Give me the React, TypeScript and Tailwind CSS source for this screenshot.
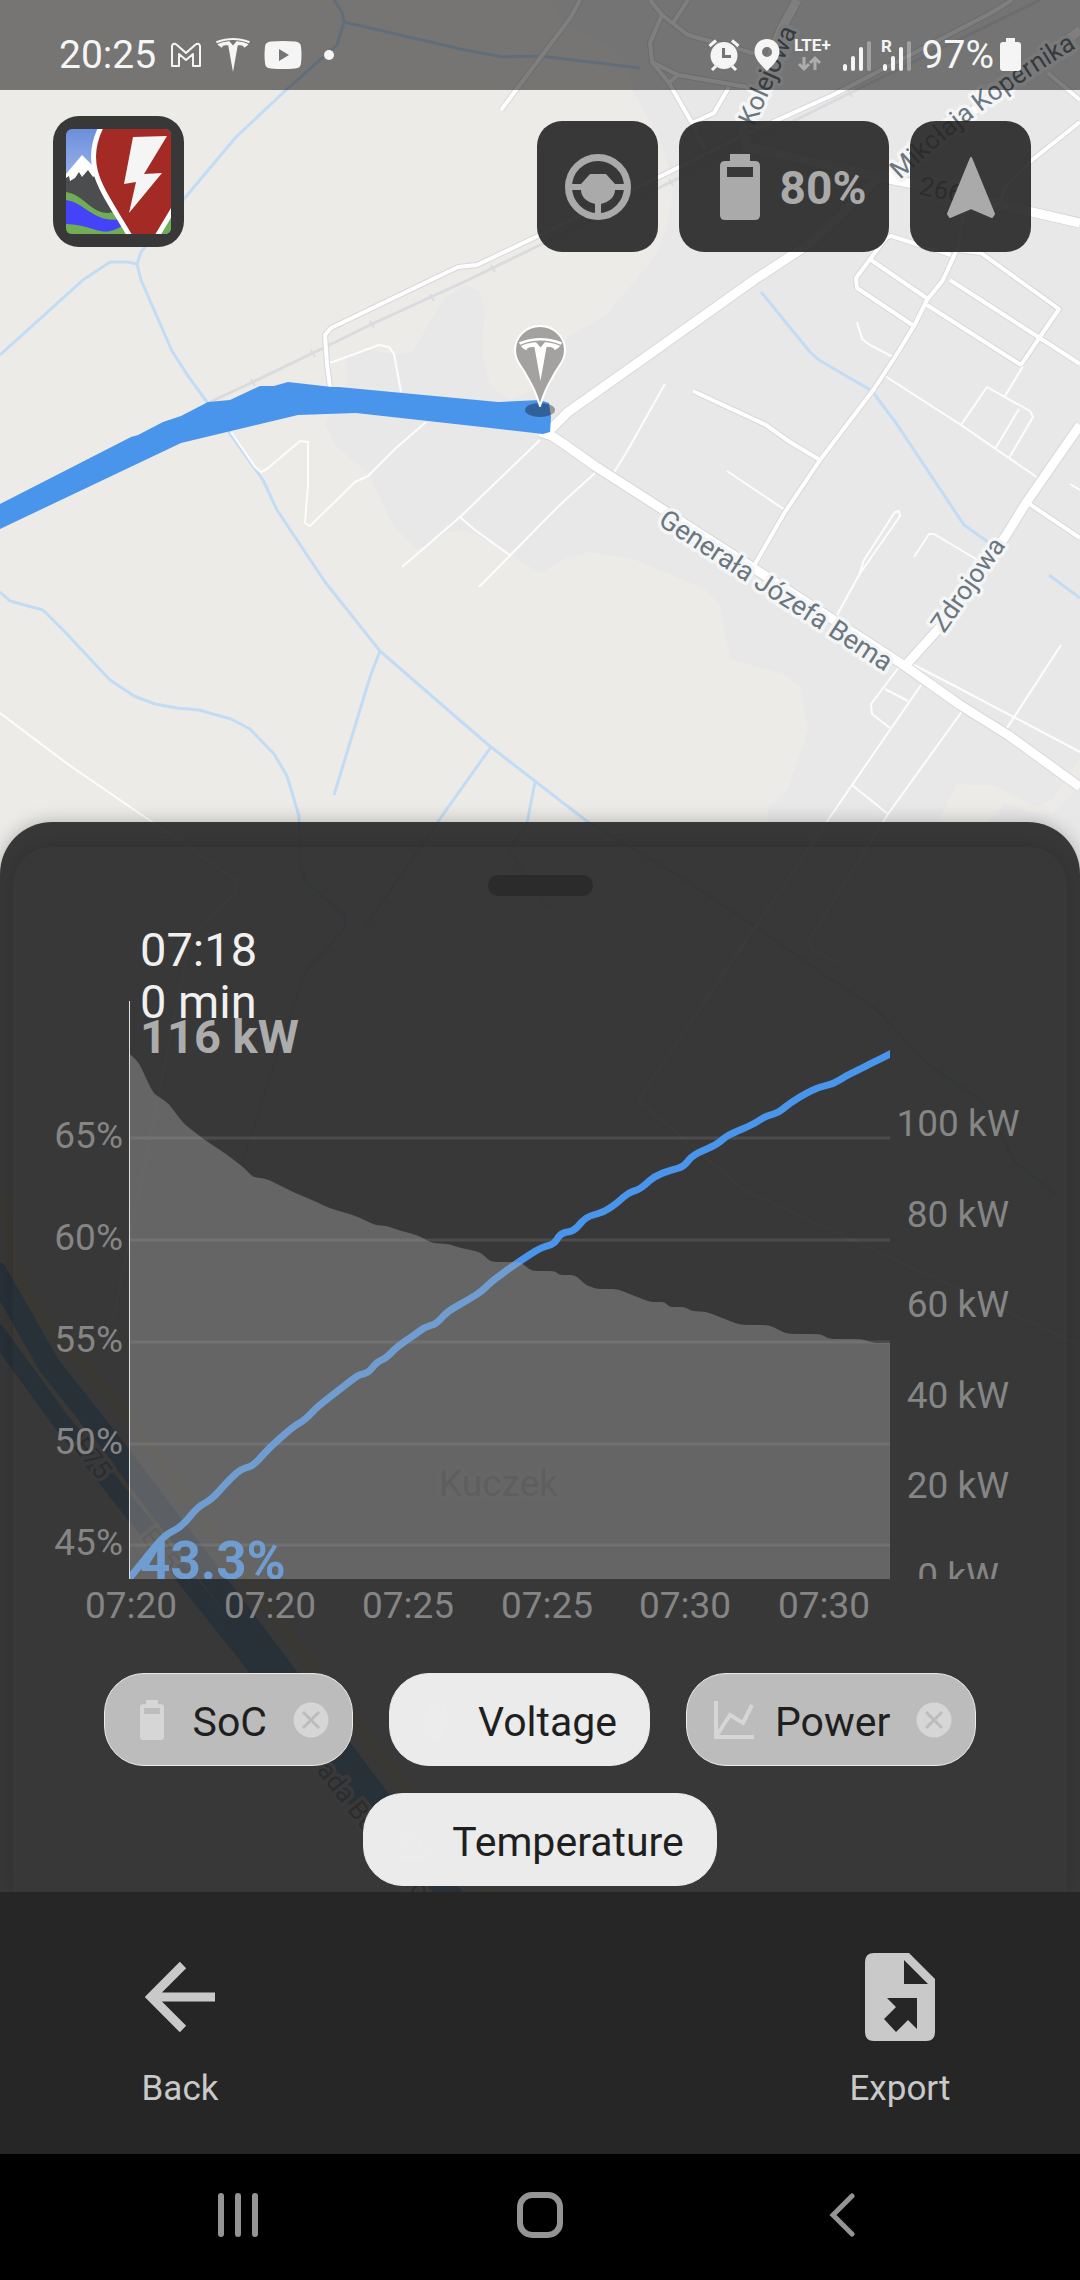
import type { ReactNode } from 'react';
import { SiTesla } from 'react-icons/si';

const socPoints =
  '129,1579 148,1555 165,1535 181,1527 198,1507 212,1499 229,1480 241,1469 253,1466 270,1447 293,1427 306,1419 317,1407 339,1390 358,1375 368,1373 377,1362 386,1358 398,1346 413,1336 425,1327 436,1324 448,1311 468,1300 482,1291 492,1281 517,1263 540,1248 554,1244 561,1233 574,1231 586,1217 604,1212 617,1203 628,1193 640,1189 655,1176 671,1170 683,1167 693,1155 716,1145 728,1135 752,1125 766,1116 778,1113 790,1103 805,1094 819,1087 833,1084 846,1076 860,1069 876,1061 892,1053';

const powerPoints =
  '129,1053 139,1063 153,1093 168,1103 184,1124 205,1140 226,1154 243,1167 253,1177 267,1179 293,1192 312,1200 329,1208 356,1216 375,1225 387,1226 398,1230 417,1235 432,1243 448,1244 461,1248 480,1252 491,1262 520,1262 532,1271 554,1271 560,1275 575,1275 586,1285 597,1289 617,1289 650,1302 664,1302 670,1307 684,1307 692,1311 707,1312 740,1325 769,1325 787,1334 820,1334 830,1339 861,1339 874,1343 890,1343';

// Rounds the corners of a point list, `amount` being the share of each
// segment that is given up to the curve at either end.
function smoothPath(points: string, amount: number): string {
  const pts = points.split(' ').map((p) => p.split(',').map(Number));
  let d = `M${pts[0][0]} ${pts[0][1]}`;
  for (let i = 1; i < pts.length - 1; i++) {
    const [x, y] = pts[i];
    const [px, py] = pts[i - 1];
    const [nx, ny] = pts[i + 1];
    d += `L${x + (px - x) * amount} ${y + (py - y) * amount}`;
    d += `Q${x} ${y} ${x + (nx - x) * amount} ${y + (ny - y) * amount}`;
  }
  const last = pts[pts.length - 1];
  return `${d}L${last[0]} ${last[1]}`;
}

const SOC_LINE = smoothPath(socPoints, 0.4);
const POWER_AREA = `${smoothPath(powerPoints, 0.25)}V1579H129Z`;

const socTicks = [
  { label: '65%', y: 1138 },
  { label: '60%', y: 1240 },
  { label: '55%', y: 1342 },
  { label: '50%', y: 1444 },
  { label: '45%', y: 1545 },
];

const powerTicks = [
  { label: '100 kW', y: 1136 },
  { label: '80 kW', y: 1227 },
  { label: '60 kW', y: 1317 },
  { label: '40 kW', y: 1408 },
  { label: '20 kW', y: 1498 },
  { label: '0 kW', y: 1589 },
];

const timeTicks = [
  { label: '07:20', x: 131 },
  { label: '07:20', x: 270 },
  { label: '07:25', x: 408 },
  { label: '07:25', x: 547 },
  { label: '07:30', x: 685 },
  { label: '07:30', x: 824 },
];

const water = [
  'M334 0 342 12 344 22 337 45 286 90 236 137 184 199 141 252 137 264 141 280 172 351 188 376 207 402 229 432 263 480 277 510 325 582 380 651 456 717 491 747 540 785 588 822 674 873 753 925 829 978 874 1007 929 1065 984 1102 1015 1162 1057 1195',
  'M137 264 128 262H110L83 280 0 355',
  'M344 22 465 50 503 57 540 56 640 68',
  'M0 592 10 601 43 610 65 632 110 680 134 696 155 704 177 708 199 710 231 719 250 729 274 754 287 776 299 816 300 863 305 880 345 917V928L305 972 270 1077 241 1167 141 1433',
  'M380 651 370 677 334 795',
  'M491 747 437 823 365 927',
  'M535 782 527 823 509 850 548 908',
  'M761 292 810 352 819 360 872 391 896 423 964 525 988 542',
  'M1049 575 1080 598',
];

const thinRoads = [
  'M727 471 785 510',
  'M665 384 626 453 613 474',
  'M595 473 564 501 540 525 479 587',
  'M540 440 460 517 402 567',
  'M460 517 475 530 511 556',
  'M857 322 862 339 870 345 895 358',
  'M885 376 961 425 1038 478',
  'M961 425 987 387 1030 411 1033 417 1009 458',
  'M1019 409 995 449',
  'M1005 396 1048 325',
  'M836 617 859 575 900 516 899 511 895 512 864 560 859 575',
  'M914 557 929 534H934L981 562',
  'M1070 484 1080 490',
  'M908 662 953 685 1080 752',
  'M1061 645 1007 728',
  'M899 667 871 704 872 714 890 728',
  'M885 689 908 701',
  'M921 685 852 785 826 823 638 1100 744 1190 1080 1345',
  'M963 710 888 814 809 940 812 948 838 964',
  'M852 785 888 814',
  'M330 363 379 345 389 347 394 354 401 392',
  'M231 432 255 467 261 472 267 469 300 441 308 442 308 484 305 523 310 526 355 482 368 476 396 448 426 422',
  'M0 713 69 765 152 822 236 880 235 893 190 940 113 1320',
];

const minorRoads = [
  'M755 564 785 512 820 460 874 389 895 357 914 326 927 300 943 280 958 247 964 213',
  'M693 391 766 425 790 442 820 460',
  'M914 326 857 288 856 278 886 238 891 236 951 255',
  'M871 260 928 299',
  'M927 305 1021 365',
  'M950 280 1080 364',
  'M958 250 981 253 1059 309 1048 325 1021 365',
  'M1028 503 1080 538',
  'M580 0 571 17 501 110',
  'M650 0 662 15 688 35 760 55',
  'M688 0 673 23',
  'M662 15 650 43 652 62 669 83 692 123 705 150',
  'M652 62 678 75 747 87',
  'M669 83 678 75',
  'M729 87 714 113 692 123',
  'M1048 73 1080 100',
  'M1080 122 1032 160 1005 187 1001 200',
  'M1012 0 991 13 833 95 740 137 659 177 540 235 477 265 458 267 331 328 325 335 327 364 330 387',
];

const mainRoads = [
  'M550 430 568 412 643 359 754 280 812 242 881 175',
  'M540 432 552 436 564 444 595 466 662 509 905 666 960 705 1008 735 1080 787',
  'M905 666 941 626 1005 537 1026 503 1080 425',
  'M797 0 781 30 747 117 743 133 747 147 884 178 919 185 1032 212 1080 223',
  'M884 178 988 100 1080 30',
];

function MapCanvas() {
  const label = 'fill-[#6b767e] stroke-[#f4f5f6] text-[26px] [paint-order:stroke]';

  return (
    <svg
      viewBox="0 0 1080 2280"
      preserveAspectRatio="xMidYMin slice"
      className="absolute inset-0 h-full w-full"
      fill="none"
      strokeLinejoin="round"
      role="img"
      aria-label="Map"
    >
      <rect width="1080" height="2280" fill="#ecebe7" />
      <path
        fill="#e8e8e8"
        d="M547 0 566 23 602 43 628 67 635 95 657 133 664 150 674 187 667 227 657 253 636 280 605 316 568 337 530 391 510 400 491 387 482 351 485 309 479 291 465 285 444 298 413 351 396 355 372 350 347 353V412L331 414 325 425 336 446 368 473 393 525 418 550 448 532 461 530 482 537 540 573 568 557 588 552 633 559 705 589 720 605 730 659 785 675 801 687 808 730 788 789 768 809 770 900H1080V0Z"
      />
      <path fill="#ecebe7" d="M939 819 957 784 995 786 1036 807 1052 800 1080 759V787L1052 814 1036 814 1005 803 988 822 960 830Z" />

      <g stroke="#c2dcf4" strokeWidth="3">
        {water.map((d) => <path key={d} d={d} />)}
      </g>
      <g stroke="#dadbde" strokeWidth="3">
        <path d="M210 402 253 382 313 353 372 324 468 280 540 245 671 182 850 93 1040 0" />
        <path d="M251 379 255 386M311 350 315 357M370 321 374 328M430 294 434 301M491 265 495 272M669 179 673 186M848 90 852 97" strokeWidth="2" />
      </g>
      <g stroke="#fdfdfd" strokeWidth="2">
        {thinRoads.map((d) => <path key={d} d={d} />)}
      </g>
      <g stroke="#d7d8da" strokeWidth="6">
        {minorRoads.map((d) => <path key={d} d={d} />)}
      </g>
      <g stroke="#d7d8da" strokeWidth="11">
        {mainRoads.map((d) => <path key={d} d={d} />)}
      </g>
      <g stroke="#fff" strokeWidth="4">
        {minorRoads.map((d) => <path key={d} d={d} />)}
      </g>
      <g stroke="#fff" strokeWidth="9">
        {mainRoads.map((d) => <path key={d} d={d} />)}
      </g>

      {/* motorway running below the sheet */}
      <g strokeLinecap="round">
        <path stroke="#f6e6b0" strokeWidth="11" d="M3 1200 14 1267 41 1317 129 1417 300 1650 492 1900" />
        <path stroke="#f6e6b0" strokeWidth="6" d="M0 1310 48 1390 255 1650 444 1900" />
        <path stroke="#4a95ec" strokeWidth="22" d="M-4 1272 49 1365 122 1458 267 1650 455 1900" />
        <path stroke="#4a95ec" strokeWidth="18" d="M-4 1332 60 1420 243 1650 434 1900" />
      </g>

      <path
        fill="#4a95ec"
        d="M0 504 131 437 138 435 163 422 181 416 208 402 230 400 260 386H274L288 382 332 387H339L498 402 540 400 549 403 551 417 550 432 543 434 482 427 356 413 298 415 181 443 0 529Z"
      />

      <g strokeWidth="7">
        <text transform="translate(754 127) rotate(-66)" className={label}>Kolejowa</text>
        <path id="kopernika" d="M900 180 Q985 100 1090 40" />
        <text className={label}><textPath href="#kopernika">Mikołaja Kopernika</textPath></text>
        <text transform="translate(657 524) rotate(33)" className="fill-[#6b767e] stroke-[#f4f5f6] text-[27px] [paint-order:stroke]">
          Generała Józefa Bema
        </text>
        <text transform="translate(944 634) rotate(-55)" className={label}>Zdrojowa</text>
        <text transform="translate(918 194) rotate(12)" className={label}>266</text>
        <text transform="translate(72 1446) rotate(52)" className={label}>E75</text>
        <text transform="translate(140 1537) rotate(52)" className={label}>E75</text>
        <text transform="translate(264 1704) rotate(52)" className={label}>Autostrada Bursztynowa</text>
        <text x="439" y="1496" className="fill-[#6b767e] stroke-[#f4f5f6] text-[37px] [paint-order:stroke]">Kuczek</text>
      </g>

      {/* charger marker */}
      <ellipse cx="540" cy="410" rx="15" ry="7" fill="#000" fillOpacity=".35" />
      <path
        fill="#a3a2a0"
        stroke="#fff"
        strokeWidth="2"
        d="M540 406C536 392 532 385 524 371 518 362 515 358 515 350a25 24 0 0 1 50 0C565 358 562 362 556 371 548 385 544 392 540 406Z"
      />
      <SiTesla x="519" y="338" size={43} color="#fff" />
    </svg>
  );
}

function SignalIcon({ roaming }: { roaming?: boolean }) {
  return (
    <svg viewBox="0 0 30 34" className="h-[34px] w-[30px] overflow-visible" strokeWidth="4" strokeLinecap="round" stroke="currentColor">
      {roaming && <text x="-1" y="14" stroke="none" className="fill-current text-[17px] font-bold">R</text>}
      <path d="M3 31V28M11 31V20M19 31V11" />
      <path d="M27 31V5" strokeOpacity=".35" />
    </svg>
  );
}

function StatusBar() {
  return (
    <div className="flex h-[90px] items-center justify-between bg-black/50 pt-5 pr-[59px] pl-[59px] text-[39px] text-[#f5f5f5]">
      <div className="flex items-center gap-[14px]">
        <span>20:25</span>
        <svg viewBox="0 0 32 26" className="h-[26px] w-8" fill="none" stroke="currentColor" strokeWidth="2" strokeLinejoin="round">
          <path d="M2 24V4Q3 0 7 3L16 11 25 3Q29 0 30 4V24H23V12L16 18 9 12V24Z" />
        </svg>
        <SiTesla className="size-[34px]" />
        <svg viewBox="0 0 38 28" className="h-7 w-[38px]">
          <path fill="currentColor" fillRule="evenodd" d="M7 .5Q19-.5 31 .5 37 1 37 6 38 14 37 22 37 27 31 27.500 19 28.500 7 27.500 1 27 1 22 0 14 1 6 1 1 7 .5ZM15 8V20L25 14Z" />
        </svg>
        <span className="ml-2 size-[10px] rounded-full bg-[#f5f5f5]" />
      </div>
      <div className="flex items-center gap-[10px]">
        <svg viewBox="0 0 32 32" className="mr-1 size-8">
          <path fill="currentColor" fillRule="evenodd" d="M16 3a13.500 13.500 0 1 1 0 27 13.500 13.500 0 0 1 0-27ZM14 9V19H23V16H17V9Z" />
          <path d="M1.500 7 8 1.500M30.500 7 24 1.500M4 31 8 27M28 31 24 27" stroke="currentColor" strokeWidth="3" />
        </svg>
        <svg viewBox="0 0 26 32" className="mr-1 h-8 w-[26px]">
          <path fill="currentColor" fillRule="evenodd" d="M13 0C20 0 25.500 5.500 25.500 12.500 25.500 20 19 26 13 32 7 26 .5 20 .5 12.500.5 5.500 6 0 13 0ZM13 8a5 5 0 1 0 0 10 5 5 0 0 0 0-10Z" />
        </svg>
        <svg viewBox="0 0 38 36" className="h-9 w-[38px] overflow-visible">
          <text x="0" y="14" className="fill-current text-[17px] font-bold">LTE+</text>
          <path d="M10 20V31M5 27 10 32 15 27M21 33V22M16 26 21 21 26 26" fill="none" stroke="currentColor" strokeOpacity=".45" strokeWidth="3" />
        </svg>
        <SignalIcon />
        <SignalIcon roaming />
        <div className="flex items-center gap-[6px]">
          <span>97%</span>
          <svg viewBox="0 0 21 34" className="h-[34px] w-[21px]">
            <path fill="currentColor" d="M6 0H15V4H18Q21 4 21 7V30Q21 33 18 33H3Q0 33 0 30V7Q0 4 3 4H6Z" />
          </svg>
        </div>
      </div>
    </div>
  );
}

function AppLogo() {
  return (
    <svg viewBox="0 0 105 105" className="w-full rounded-md" fill="none">
      <defs>
        <linearGradient id="sky" x1="0" y1="0" x2="0" y2="1">
          <stop stopColor="#6c8fdc" />
          <stop offset=".5" stopColor="#9cb4ec" />
        </linearGradient>
      </defs>
      <rect width="105" height="105" fill="url(#sky)" />
      <path fill="#4c4d4f" d="M0 46 16 30 60 80V105H0Z" />
      <path fill="#fff" d="M0 45 16 26 34 44 27 48 22 41 16 48 13 43 9 49 4 52 3 47 0 49Z" />
      <path fill="#70ad55" d="M0 63C18 66 25 84 42 84L70 80V105H0Z" />
      <path fill="#4543f7" d="M0 71C20 74 28 95 56 90V97C35 110 30 96 0 95Z" />
      <path fill="#70ad55" d="M90 105 105 82V105Z" />
      <path fill="#a42b25" stroke="#fff" strokeWidth="5" d="M36-4C14 38 38 62 65 109H90L112 72V-4Z" />
      <path fill="#f5f5f5" d="M67 8 101 7 78 45 96 44 63 84 70 53 58 55Z" />
    </svg>
  );
}

function BatteryIcon({ className }: { className: string }) {
  return (
    <svg viewBox="0 0 40 66" preserveAspectRatio="none" className={className}>
      <path
        fill="currentColor"
        fillRule="evenodd"
        d="M10 0H30V7H35Q40 7 40 12V61Q40 66 35 66H5Q0 66 0 61V12Q0 7 5 7H10ZM7 13V23H33V13Z"
      />
    </svg>
  );
}

function MapButton({ label, className, children }: { label: string; className: string; children: ReactNode }) {
  return (
    <button
      type="button"
      aria-label={label}
      className={`flex h-[131px] items-center justify-center gap-5 rounded-[25px] bg-[#252525]/90 text-[#aaaaaa] ${className}`}
    >
      {children}
    </button>
  );
}

function TopControls() {
  return (
    <header className="flex items-start justify-between pt-[26px] pr-[49px] pl-[53px]">
      <button type="button" aria-label="Home" className="w-[131px] rounded-[26px] bg-[#383838] p-[13px]">
        <AppLogo />
      </button>
      <div className="flex gap-[21px] pt-[5px]">
        <MapButton label="Driving mode" className="w-[121px]">
          <svg viewBox="0 0 66 66" className="size-[66px]">
            <circle cx="33" cy="33" r="29.500" fill="none" stroke="currentColor" strokeWidth="7" />
            <path fill="currentColor" d="M3 30H16L25 20H41L50 30H63V36H50C50 43 44 48 36 50V63H30V50C22 48 16 43 16 36H3Z" />
          </svg>
        </MapButton>
        <MapButton label="Target charge 80%" className="w-[210px] pl-[18px]">
          <BatteryIcon className="h-[66px] w-10" />
          <span className="pt-1 text-[46px] font-bold">80%</span>
        </MapButton>
        <MapButton label="Navigate" className="w-[121px]">
          <svg viewBox="0 0 50 62" className="h-[62px] w-[50px]">
            <path fill="currentColor" stroke="currentColor" strokeWidth="2" strokeLinejoin="round" d="M25 2 48 58 46 61 25 52 4 61 2 58Z" />
          </svg>
        </MapButton>
      </div>
    </header>
  );
}

function ChargeChart() {
  return (
    <svg viewBox="13 900 1054 740" className="mt-1 w-full" fill="none" role="img" aria-label="Charge session">
      <clipPath id="plot">
        <rect x="13" y="900" width="1054" height="679" />
      </clipPath>
      <clipPath id="series">
        <rect x="129" y="900" width="761" height="679" />
      </clipPath>
      <g stroke="#fff" strokeOpacity=".1" strokeWidth="3">
        {socTicks.map((tick) => <path key={tick.label} d={`M129 ${tick.y}H890`} />)}
      </g>
      <g clipPath="url(#series)">
        <path d={SOC_LINE} stroke="#4a95ec" strokeWidth="7" />
        <text x="140" y="1579" className="fill-[#4a95ec] text-[53px] font-bold">43.3%</text>
        <path d={POWER_AREA} fill="#ababab" fillOpacity=".4" />
      </g>
      <path d="M129 1001V1579" stroke="#e0e0e0" strokeWidth="1" shapeRendering="crispEdges" />

      <g className="fill-[#858585] text-[37px]" clipPath="url(#plot)">
        {socTicks.map((tick) => (
          <text key={tick.label} x="123" y={tick.y + 10} textAnchor="end">{tick.label}</text>
        ))}
        {powerTicks.map((tick) => (
          <text key={tick.label} x="958" y={tick.y} textAnchor="middle">{tick.label}</text>
        ))}
      </g>
      <g className="fill-[#858585] text-[37px]">
        {timeTicks.map((tick) => (
          <text key={tick.x} x={tick.x} y="1618" textAnchor="middle">{tick.label}</text>
        ))}
      </g>

      <g className="fill-[#f0f0f0] text-[47px]">
        <text x="140" y="966">07:18</text>
        <text x="140" y="1018">0 min</text>
        <text x="140" y="1053" className="fill-[#acacac] font-bold">116 kW</text>
      </g>
    </svg>
  );
}

function ChipCloseIcon() {
  return (
    <svg viewBox="0 0 36 36" className="ml-[26px] size-9 text-[#d6d6d6]">
      <circle cx="18" cy="18" r="17.500" fill="currentColor" />
      <path d="M10 10 26 26M26 10 10 26" stroke="#bcbcbc" strokeWidth="3" />
    </svg>
  );
}

function Chip({ label, icon, selected }: { label: string; icon: ReactNode; selected?: boolean }) {
  return (
    <button
      type="button"
      aria-pressed={selected ?? false}
      className={`flex h-[93px] items-center rounded-[40px] border border-[#ebebeb] pl-[22px] text-[41px] text-[#1f1f1f] ${
        selected ? 'bg-[#bcbcbc] pr-[23px]' : 'bg-[#ebebeb] pr-8'
      }`}
    >
      <span className={`mr-4 flex w-[50px] justify-center ${selected ? 'text-[#d6d6d6]' : 'text-[#ececec]'}`}>
        {icon}
      </span>
      <span className="pt-[6px]">{label}</span>
      {selected && <ChipCloseIcon />}
    </button>
  );
}

function SeriesChips() {
  return (
    <div className="mt-[33px] flex flex-wrap justify-center gap-x-9 gap-y-[27px] px-10">
      <Chip label="SoC" selected icon={<BatteryIcon className="h-10 w-6" />} />
      <Chip
        label="Voltage"
        icon={
          <svg viewBox="0 0 24 38" className="h-[38px] w-6">
            <path fill="currentColor" d="M4 0H8V9H16V0H20V9L24 13V26L16 33V38H8V33L0 26V13L4 9Z" />
          </svg>
        }
      />
      <Chip
        label="Power"
        selected
        icon={
          <svg viewBox="0 0 40 38" className="h-[38px] w-10" fill="none" stroke="currentColor" strokeWidth="4">
            <path d="M2 0V36H40M3 34 16 14 29 22 38 4" />
          </svg>
        }
      />
      <Chip
        label="Temperature"
        icon={
          <svg viewBox="0 0 36 38" className="h-[38px] w-9" fill="none" stroke="currentColor" strokeWidth="3">
            <path d="M2 36H34L26 22M10 22a8 8 0 0 1 16 0M4 30 10 20" />
          </svg>
        }
      />
    </div>
  );
}

function Sheet() {
  return (
    <section className="overflow-hidden rounded-t-[52px] bg-[#252525]/90 px-[13px] pt-[25px] shadow-[0_0_18px_rgba(0,0,0,0.25)]">
      <div className="flex flex-col items-center rounded-t-[38px] pt-7 pb-[6px] shadow-[0_0_24px_rgba(0,0,0,0.16)]">
        <div className="h-[21px] w-[105px] rounded-full bg-[#2b2b2b]" />
        <ChargeChart />
        <SeriesChips />
      </div>
    </section>
  );
}

function Toolbar() {
  return (
    <nav className="grid h-[262px] grid-cols-3 bg-[#262626] text-[35px] text-[#c9c9c9]">
      <button type="button" className="flex flex-col items-center pt-[61px]">
        <svg viewBox="0 0 70 88" className="h-[88px] w-[70px]" fill="none" stroke="currentColor" strokeWidth="9">
          <path d="M38 12 6 44 38 76M6 44H70" />
        </svg>
        <span className="mt-7 leading-10">Back</span>
      </button>
      <button type="button" className="col-start-3 flex flex-col items-center pt-[61px]">
        <svg viewBox="0 0 70 88" className="h-[88px] w-[70px]">
          <path
            fill="currentColor"
            fillRule="evenodd"
            d="M9 0H44L70 26V79Q70 88 61 88H9Q0 88 0 79V9Q0 0 9 0ZM39 7V31H63ZM22 45 31 54 19 66 31 79 43 67 52 76V45Z"
          />
        </svg>
        <span className="mt-7 leading-10">Export</span>
      </button>
    </nav>
  );
}

function SystemNav() {
  return (
    <div className="grid h-[126px] grid-cols-3 items-center bg-black px-[87px] pb-1 text-[#949494]">
      <button type="button" aria-label="Recent apps" className="flex justify-center">
        <svg viewBox="0 0 40 44" className="h-11 w-10" stroke="currentColor" strokeWidth="6" strokeLinecap="round">
          <path d="M3 3V41M20 3V41M37 3V41" />
        </svg>
      </button>
      <button type="button" aria-label="Home screen" className="flex justify-center">
        <svg viewBox="0 0 46 46" className="size-[46px]" fill="none" stroke="currentColor" strokeWidth="6">
          <rect x="3" y="3" width="40" height="40" rx="12" />
        </svg>
      </button>
      <button type="button" aria-label="Previous screen" className="flex justify-center">
        <svg viewBox="0 0 26 44" className="h-11 w-[26px]" fill="none" stroke="currentColor" strokeWidth="5" strokeLinecap="round">
          <path d="M23 3 4 22 23 41" />
        </svg>
      </button>
    </div>
  );
}

export default function App() {
  return (
    <div className="relative flex min-h-screen flex-col overflow-hidden font-['Roboto',sans-serif]">
      <MapCanvas />
      <div className="relative flex flex-1 flex-col">
        <StatusBar />
        <TopControls />
        <main className="mt-auto pt-40">
          <Sheet />
        </main>
        <Toolbar />
        <SystemNav />
      </div>
    </div>
  );
}
